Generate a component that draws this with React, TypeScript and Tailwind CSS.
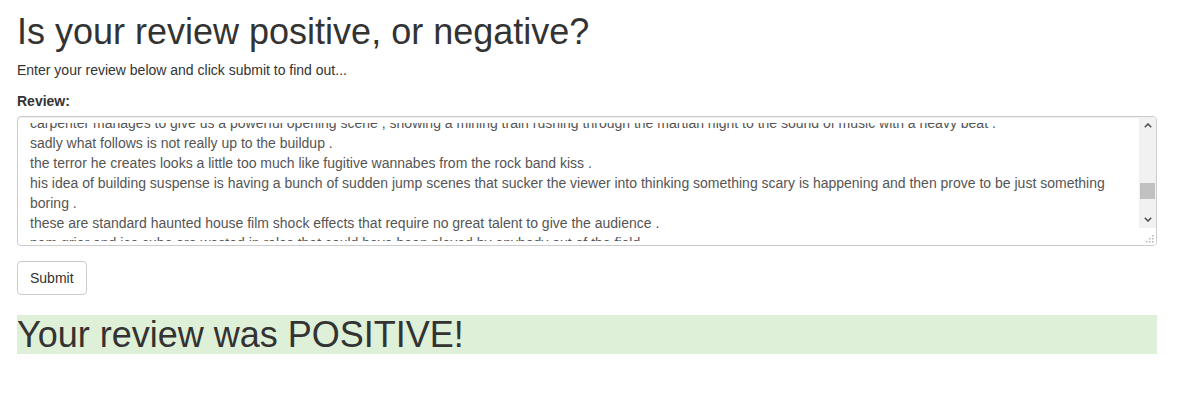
import React from 'react';

const reviewLines = [
  'carpenter manages to give us a powerful opening scene , showing a mining train rushing through the martian night to the sound of music with a heavy beat .',
  'sadly what follows is not really up to the buildup .',
  'the terror he creates looks a little too much like fugitive wannabes from the rock band kiss .',
  'his idea of building suspense is having a bunch of sudden jump scenes that sucker the viewer into thinking something scary is happening and then prove to be just something',
  'boring .',
  'these are standard haunted house film shock effects that require no great talent to give the audience .',
  'pam grier and ice cube are wasted in roles that could have been played by anybody out of the field .',
];

function Chevron({ up }: { up?: boolean }) {
  return (
    <svg width="8" height="5" viewBox="0 0 8 5" className="block">
      <polyline
        points={up ? '0.8,4.2 4,1 7.2,4.2' : '0.8,0.8 4,4 7.2,0.8'}
        fill="none"
        stroke="#505050"
        strokeWidth="1.6"
      />
    </svg>
  );
}

function Grip() {
  const dots = [
    [6, 0],
    [3, 3],
    [6, 3],
    [0, 6],
    [3, 6],
    [6, 6],
  ];
  return (
    <svg width="8" height="8" viewBox="0 0 8 8" className="block">
      {dots.map(([x, y]) => (
        <rect key={`${x}-${y}`} x={x} y={y} width="1.5" height="1.5" fill="#b5b5b5" />
      ))}
    </svg>
  );
}

function ReviewBox() {
  return (
    <div className="flex h-[130px] w-[1140px] overflow-hidden rounded-[4px] border border-[#ccc] bg-white shadow-[inset_0_1px_1px_rgba(0,0,0,0.075)]">
      {/* scrolled text, clipped a little inside the edges */}
      <div className="mb-[4px] mt-[6px] flex-1 overflow-hidden pl-[12px] text-[14px] leading-[20px] text-[#555]">
        <div className="-mt-[10px]">
          {reviewLines.map((line, i) => (
            <div key={i} className="whitespace-nowrap">
              {line}
            </div>
          ))}
        </div>
      </div>
      {/* fake scrollbar */}
      <div className="flex w-[17px] flex-col">
        <div className="flex h-[17px] items-center justify-center bg-[#f1f1f1]">
          <Chevron up />
        </div>
        <div className="flex-1 bg-[#f1f1f1] pt-[49px]">
          <div className="mx-[1px] h-[16px] bg-[#c1c1c1]" />
        </div>
        <div className="flex h-[17px] items-center justify-center bg-[#f1f1f1]">
          <Chevron />
        </div>
        <div className="flex h-[17px] items-end justify-end bg-white pb-[2px] pr-[2px]">
          <Grip />
        </div>
      </div>
    </div>
  );
}

export default function App() {
  return (
    <div className="min-h-[407px] bg-white pl-[17px] font-['Liberation_Sans',Arial,sans-serif] text-[#333]">
      <div className="w-[1140px] pt-[12px]">
        <h1 className="mb-[8px] text-[36px] font-normal leading-[40px]">
          Is your review positive, or negative?
        </h1>
        <p className="mb-[11px] text-[14px] leading-[20px]">
          Enter your review below and click submit to find out...
        </p>
        <label className="mb-[5px] block text-[14px] font-bold leading-[20px]">Review:</label>
        <ReviewBox />
        <button
          type="button"
          className="mt-[15px] rounded-[4px] border border-[#ccc] bg-white px-[12px] py-[6px] text-[14px] leading-[20px] text-[#333]"
        >
          Submit
        </button>
        <div className="mt-[20px] h-[39px] bg-[#dff0d8] text-[36px] leading-[39px] text-[#333]">
          Your review was POSITIVE!
        </div>
      </div>
    </div>
  );
}
